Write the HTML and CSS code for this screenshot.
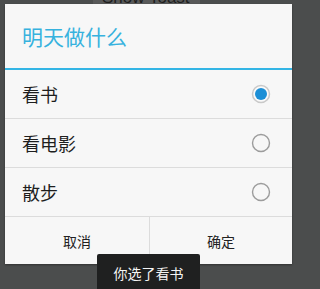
FILE: index.html
```html
<!DOCTYPE html>
<html lang="zh">
<head>
<meta charset="utf-8">
<title>明天做什么</title>
<link rel="stylesheet" href="styles.css">
</head>
<body>
<div class="behind"><span class="behind-btn">Show Toast</span></div>
<div class="dialog">
  <div class="title">明天做什么</div>
  <div class="title-line"></div>
  <div class="list">
    <div class="item"><span>看书</span>
      <svg class="radio" width="20" height="20" viewBox="0 0 20 20"><circle cx="10" cy="10" r="8.5" fill="#fafafa" stroke="#c9c9c9" stroke-width="1.5"/><circle cx="10" cy="10" r="6" fill="#1c8fd6"/></svg>
    </div>
    <div class="item"><span>看电影</span>
      <svg class="radio" width="20" height="20" viewBox="0 0 20 20"><circle cx="10" cy="10" r="8.5" fill="none" stroke="#9c9c9c" stroke-width="1.4"/></svg>
    </div>
    <div class="item"><span>散步</span>
      <svg class="radio" width="20" height="20" viewBox="0 0 20 20"><circle cx="10" cy="10" r="8.5" fill="none" stroke="#9c9c9c" stroke-width="1.4"/></svg>
    </div>
  </div>
  <div class="buttons">
    <div class="btn">取消</div>
    <div class="btn">确定</div>
  </div>
</div>
<div class="toast">你选了看书</div>
</body>
</html>
```

FILE: styles.css
```css
html, body {
  margin: 0;
  padding: 0;
}
body {
  width: 297px;
  height: 289px;
  overflow: hidden;
  position: relative;
  background: #4b4d4d;
  font-family: "Noto Sans CJK SC", "Noto Sans", sans-serif;
}
.behind {
  position: absolute;
  left: 93px;
  top: 0;
  width: 107px;
  height: 4px;
  background: #585959;
  overflow: hidden;
}
.behind-btn {
  position: absolute;
  left: 9px;
  bottom: -2px;
  white-space: nowrap;
  font-family: "Liberation Sans", sans-serif;
  font-size: 17px;
  line-height: 17px;
  color: #1e1e1e;
}
.dialog {
  position: relative;
  margin: 4px 5px 0;
  height: 260px;
  background: #f7f7f7;
  display: flex;
  flex-direction: column;
  box-shadow: 0 1px 2px rgba(0, 0, 0, 0.35);
}
.title {
  height: 64px;
  padding-left: 17px;
  display: flex;
  align-items: center;
  font-size: 21px;
  color: #36b2de;
}
.title-line {
  height: 2px;
  background: #33b5e5;
}
.item {
  height: 48px;
  border-bottom: 1px solid #dcdcdc;
  display: flex;
  align-items: center;
  justify-content: space-between;
  padding: 0 21px 0 17px;
  font-size: 18px;
  color: #1e1e1e;
}
.radio {
  display: block;
}
.buttons {
  flex: 1;
  display: grid;
  grid-template-columns: 144px 1fr;
}
.btn {
  display: flex;
  align-items: center;
  justify-content: center;
  font-size: 14px;
  color: #222;
}
.btn + .btn {
  border-left: 1px solid #dcdcdc;
}
.toast {
  position: absolute;
  left: 97px;
  top: 254px;
  width: 103px;
  height: 42px;
  background: #1f2020;
  border-radius: 2px;
  color: #f4f4f4;
  font-size: 14px;
  text-align: center;
  line-height: 20px;
  padding-top: 9px;
  box-sizing: border-box;
}
```
